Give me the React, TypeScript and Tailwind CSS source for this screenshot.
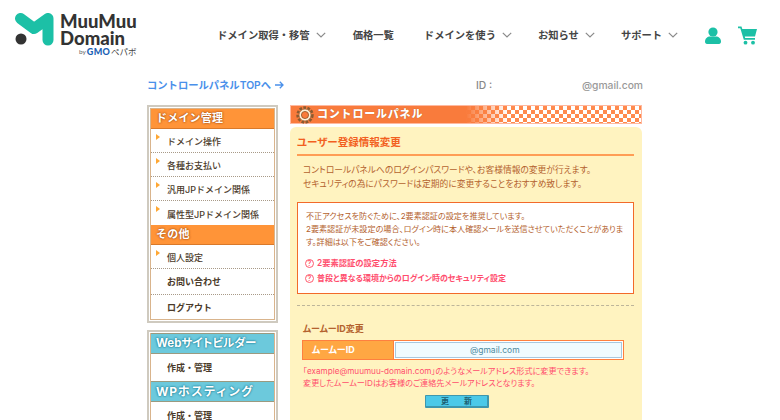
import React from "react";

const jp = "font-['Inter','Noto_Sans_CJK_JP',sans-serif]";

function Chevron() {
  return (
    <svg width="10" height="6" viewBox="0 0 10 6" fill="none" stroke="#8a8a8a" strokeWidth="1.2" className="ml-[6px]">
      <path d="M.8 .8 5 5 9.200 .8" />
    </svg>
  );
}

function NavItem({ label, chevron = true, className = "" }: { label: string; chevron?: boolean; className?: string }) {
  return (
    <div className={"flex items-center " + className}>
      <span className="pt-[1px] text-[10.3px] font-semibold text-[#444] whitespace-nowrap">{label}</span>
      {chevron && <Chevron />}
    </div>
  );
}

function SideItem({ label, arrow = true, h = "h-[24px]", line = true }: { label: string; arrow?: boolean; h?: string; line?: boolean }) {
  return (
    <div className={h + " relative flex items-center pl-[16px] " + (arrow ? "pt-[3px] " : "") + (line ? "border-b border-dotted border-[#a89a88]" : "")}>
      {arrow && (
        <span className="absolute left-[5px] top-[5px] w-0 h-0 border-y-[3px] border-y-transparent border-l-[4px] border-l-[#ffa733]" />
      )}
      <span className={"text-[9px] text-[#4a3a2a] whitespace-nowrap " + (arrow ? "font-medium" : "font-semibold")}>{label}</span>
    </div>
  );
}

function SideHead({ label }: { label: string }) {
  return (
    <div className="h-[20px] bg-[#ff9438] border-b border-[#d9792a] flex items-center pl-[5px]">
      <span className="text-[11px] font-bold text-white tracking-[0.2px] whitespace-nowrap [text-shadow:0_0_2px_rgba(170,80,20,1),0_0_2px_rgba(170,80,20,1)]">
        {label}
      </span>
    </div>
  );
}

function TealHead({ label, className }: { label: string; className: string }) {
  return (
    <div className="h-[21px] bg-[#6cc9dc] border-y border-[#9a9a80] flex items-center pl-[5px]">
      <span className={"font-bold text-white whitespace-nowrap [text-shadow:0_0_2px_#1b7f96,0_0_2px_#1b7f96] " + className}>
        {label}
      </span>
    </div>
  );
}

function Gear() {
  return (
    <svg width="18" height="18" viewBox="0 0 18 18" className="shrink-0">
      <circle cx="9" cy="9" r="7" fill="none" stroke="#8a5a30" strokeWidth="3.400" strokeDasharray="2.600 1.300" />
      <circle cx="9" cy="9" r="6" fill="#fff0d8" stroke="#a8683a" strokeWidth="0.8" />
      <circle cx="9" cy="9" r="3.600" fill="#f97b3c" stroke="#7a4a20" strokeWidth="0.7" />
    </svg>
  );
}

function Help() {
  return (
    <span className="w-[9px] h-[9px] rounded-full border border-[#ff5a6e] text-[#ff5a6e] text-[7px] leading-[7px] flex items-center justify-center mr-[3px]">?</span>
  );
}

export default function App() {
  return (
    <div className={"w-[780px] h-[420px] overflow-hidden bg-white " + jp}>
      <header className="h-[70px] flex items-start pl-[15px]">
        <div className="w-[122px] shrink-0 mt-[13px] flex">
          <svg width="40" height="33" viewBox="0 0 40 33" className="shrink-0">
            <path d="M5.500 5.500 19 15.500 33 5.500V27" fill="none" stroke="#1cc0a6" strokeWidth="11" strokeLinecap="round" strokeLinejoin="round" />
            <circle cx="6" cy="26" r="5.500" fill="#333" />
          </svg>
          <div className="ml-[5px] font-['Lato',sans-serif] font-black text-[#333] text-[18.5px] leading-[17px]">
            <div>MuuMuu</div>
            <div>Domain</div>
            <div className="mt-[1px] -ml-[20px] flex items-center justify-end leading-[8px] font-normal whitespace-nowrap">
              <span className="text-[#666] text-[6.5px] mr-[1px]">by</span>
              <span className="text-[#1a5fb4] font-black text-[9px] tracking-[0.3px] mr-[1px]">GMO</span>
              <span className={"text-[#444] text-[8.5px] " + jp}>ペパボ</span>
            </div>
          </div>
        </div>
        <nav className="flex items-center mt-[27px] ml-[80px] h-[16px]">
          <NavItem label="ドメイン取得・移管" />
          <NavItem label="価格一覧" chevron={false} className="ml-[27px]" />
          <NavItem label="ドメインを使う" className="ml-[30px]" />
          <NavItem label="お知らせ" className="ml-[26px]" />
          <NavItem label="サポート" className="ml-[26px]" />
          <svg width="16" height="17" viewBox="0 0 16 17" className="ml-[27px] shrink-0" fill="#1cc0a6">
            <circle cx="8" cy="5" r="4.600" />
            <path d="M0 14.500C0 11.500 2.500 9.500 5 9.500h6c2.500 0 5 2 5 5 0 1.500-.8 2.500-2 2.500H2c-1.200 0-2-1-2-2.500Z" />
          </svg>
          <svg width="19" height="19" viewBox="0 0 19 19" className="ml-[17px] shrink-0" fill="#1cc0a6">
            <path d="M0 .5h3.500l.8 2.500H19l-2 7.500H6.800l.4 1.500H17v1.800H5.800L2.300 2.200H0Z" />
            <circle cx="7.500" cy="16.700" r="1.900" />
            <circle cx="15" cy="16.700" r="1.900" />
          </svg>
        </nav>
      </header>

      <div className="w-[496px] ml-[147px] h-[30px] flex items-start pt-[7px] text-[10.3px] leading-[16px]">
        <a className="text-[#4a90ea] font-semibold whitespace-nowrap flex items-center">
          コントロールパネルTOPへ
          <svg width="9" height="8" viewBox="0 0 9 8" fill="none" stroke="#4a90ea" strokeWidth="1.300" className="ml-[4px]">
            <path d="M0 4h8M4.800 .8 8 4 4.800 7.200" />
          </svg>
        </a>
        <span className="ml-[192px] text-[#888] font-medium">ID :</span>
        <span className="ml-auto text-[#999] font-medium">@gmail.com</span>
      </div>

      <div className="w-[495px] ml-[147px] flex items-start gap-[12px] mt-[5px]">
        <aside className="w-[131px] shrink-0 flex flex-col gap-[7px]">
          <div className="border-2 border-[#cfcabf] p-[1px] bg-white h-[218px]">
            <div className="border border-[#d9b48c] h-full">
              <SideHead label="ドメイン管理" />
              <SideItem label="ドメイン操作" />
              <SideItem label="各種お支払い" />
              <SideItem label="汎用JPドメイン関係" />
              <SideItem label="属性型JPドメイン関係" line={false} />
              <SideHead label="その他" />
              <SideItem label="個人設定" />
              <SideItem label="お問い合わせ" arrow={false} h="h-[26px]" />
              <SideItem label="ログアウト" arrow={false} h="h-[26px]" line={false} />
            </div>
          </div>
          <div className="border-2 border-[#cfcabf] border-b-0 p-[1px] bg-white h-[100px]">
            <div className="border-x border-[#d9b48c] h-full">
              <TealHead label="Webサイトビルダー" className="text-[11.5px] [font-feature-settings:'palt']" />
              <div className="h-[27px] flex items-center pl-[16px] text-[9px] font-semibold text-[#4a3a2a]">作成・管理</div>
              <TealHead label="WPホスティング" className="text-[12px] tracking-[0.8px]" />
              <div className="h-[27px] flex items-center pl-[16px] text-[9px] font-semibold text-[#4a3a2a]">作成・管理</div>
            </div>
          </div>
        </aside>

        <main className="w-[352px] shrink-0">
          <div className="h-[19px] border border-[#ffb9a0] flex items-center pl-[5px] [background-image:linear-gradient(90deg,#f97b3c_50%,rgba(249,123,60,0)_62%),repeating-conic-gradient(#ff8a4d_0_25%,#ffffff_0_50%)] [background-size:100%_100%,8px_8px]">
            <Gear />
            <span className="ml-[3px] text-[11px] font-black text-white tracking-[0.8px] whitespace-nowrap [text-shadow:0_0_1px_#a84a10]">コントロールパネル</span>
          </div>
          <div className="mt-[3px] h-[300px] bg-[#fff3c0] rounded-t-[6px] px-[7px] pt-[9px] [font-feature-settings:'palt']">
            <h2 className="text-[10.5px] leading-[14px] font-bold text-[#f2601f] whitespace-nowrap">ユーザー登録情報変更</h2>
            <div className="h-[2px] bg-[#ff9d55] mt-[4px] w-[337px]" />
            <p className="ml-[6px] mt-[7px] text-[8.75px] leading-[14px] text-[#b4622e] whitespace-nowrap">
              コントロールパネルへのログインパスワードや、お客様情報の変更が行えます。<br />
              セキュリティの為にパスワードは定期的に変更することをおすすめ致します。
            </p>
            <div className="w-[337px] h-[92px] mt-[11px] border border-[#f26a2a] bg-white pl-[8px] pt-[7px]">
              <p className="text-[8.1px] leading-[13px] text-[#b4622e] whitespace-nowrap">
                不正アクセスを防ぐために、2要素認証の設定を推奨しています。<br />
                2要素認証が未設定の場合、ログイン時に本人確認メールを送信させていただくことがありま<br />
                す。詳細は以下をご確認ください。
              </p>
              <div className="mt-[7px] -ml-[1px] flex items-center text-[8.3px] leading-[14px] font-semibold text-[#ff4d6d] whitespace-nowrap"><Help />2要素認証の設定方法</div>
              <div className="mt-[1px] -ml-[1px] flex items-center text-[8px] leading-[14px] font-semibold text-[#ff4d6d] whitespace-nowrap"><Help />普段と異なる環境からのログイン時のセキュリティ設定</div>
            </div>
            <div className="w-[337px] mt-[11px] border-t border-dashed border-[#bdb59a]" />
            <h3 className="ml-[6px] mt-[16px] text-[9px] leading-[13px] font-bold text-[#b4622e] whitespace-nowrap">ムームーID変更</h3>
            <div className="ml-[5px] mt-[5px] w-[322px] h-[20px] flex border border-[#ff7f3f]">
              <div className="w-[91px] bg-[#ffa743] border-r border-[#ff7f3f] flex items-center pl-[9px] text-[9px] font-bold text-white">ムームーID</div>
              <div className="flex-1 bg-white p-[1px]">
                <div className="h-full border border-[#a8c8e0] bg-[#f0fbff] flex items-center pl-[74px] text-[8.5px] text-[#4e8aa0]">@gmail.com</div>
              </div>
            </div>
            <p className="ml-[6px] mt-[5px] text-[8.15px] leading-[12px] text-[#ff4d6d] whitespace-nowrap">
              「example@muumuu-domain.com」のようなメールアドレス形式に変更できます。<br />
              変更したムームーIDはお客様のご連絡先メールアドレスとなります。
            </p>
            <button className="flex justify-between ml-[128px] mt-[6px] w-[64px] h-[13px] bg-[#4cc9e8] border border-[#3f97ad] border-r-2 border-b-2 rounded-[1px] text-[8px] leading-[10px] text-[#1d5f72] font-bold px-[15px]">
              <span>更</span>
              <span>新</span>
            </button>
          </div>
        </main>
      </div>
    </div>
  );
}
